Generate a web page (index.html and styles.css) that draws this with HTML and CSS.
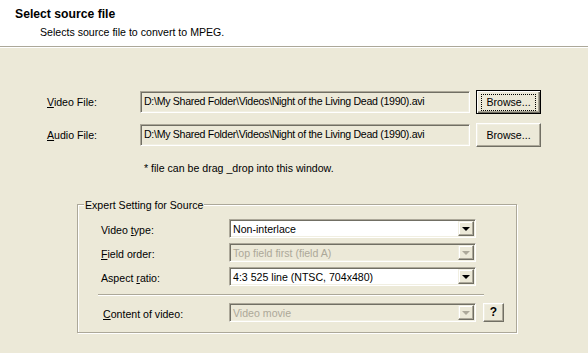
FILE: index.html
```html
<!DOCTYPE html>
<html lang="en">
<head>
	<meta charset="UTF-8">
	<title>Select source file</title>
	<link rel="stylesheet" href="styles.css">
</head>
<body>

<div class="header">
	<h1 class="title">Select source file</h1>
	<p class="subtitle">Selects source file to convert to MPEG.</p>
</div>

<div class="content">
	<div class="file-row">
		<label class="file-label"><u>V</u>ideo File:</label>
		<div class="field">D:\My Shared Folder\Videos\Night of the Living Dead (1990).avi</div>
		<button class="btn btn-browse default"><span class="focus">Browse...</span></button>
	</div>
	<div class="file-row">
		<label class="file-label"><u>A</u>udio File:</label>
		<div class="field">D:\My Shared Folder\Videos\Night of the Living Dead (1990).avi</div>
		<button class="btn btn-browse"><span>Browse...</span></button>
	</div>
	<p class="note">* file can be drag _drop into this window.</p>

	<div class="group">
		<span class="group-title">Expert Setting for Source</span>
		<div class="combo-row">
			<label class="combo-label">Video <u>t</u>ype:</label>
			<div class="combo">
				<span class="combo-text">Non-interlace</span>
				<span class="combo-btn"><i class="arrow"></i></span>
			</div>
		</div>
		<div class="combo-row">
			<label class="combo-label"><u>F</u>ield order:</label>
			<div class="combo disabled">
				<span class="combo-text">Top field first (field A)</span>
				<span class="combo-btn"><i class="arrow"></i></span>
			</div>
		</div>
		<div class="combo-row">
			<label class="combo-label">Aspect <u>r</u>atio:</label>
			<div class="combo">
				<span class="combo-text">4:3 525 line (NTSC, 704x480)</span>
				<span class="combo-btn"><i class="arrow"></i></span>
			</div>
		</div>
		<div class="sep"></div>
		<div class="combo-row last">
			<label class="combo-label"><u>C</u>ontent of video:</label>
			<div class="combo disabled">
				<span class="combo-text">Video movie</span>
				<span class="combo-btn"><i class="arrow"></i></span>
			</div>
			<button class="btn btn-help">?</button>
		</div>
	</div>
</div>

</body>
</html>
```

FILE: styles.css
```css
html, body {
	margin: 0;
	padding: 0;
}
body {
	background-color: #ece9d8;
	font-family: "Liberation Sans", Arial, sans-serif;
	font-size: 10.6px;
	color: #000;
	width: 588px;
	height: 353px;
	overflow: hidden;
}
h1, p {
	margin: 0;
	padding: 0;
}
u {
	text-decoration: underline;
}
.header {
	background-color: #fff;
	height: 47px;
	border-bottom: 1px solid #aca899;
	box-shadow: 0 1px 0 #fff;
	box-sizing: border-box;
	padding-top: 7px;
}
.title {
	font-size: 12.2px;
	font-weight: bold;
	padding-left: 15px;
	line-height: 14px;
}
.subtitle {
	padding-left: 40px;
	line-height: 14px;
	margin-top: 4px;
}
.content {
	padding-top: 43px;
}
.file-row {
	display: flex;
	align-items: center;
	padding-left: 47px;
	height: 24px;
	margin-bottom: 9px;
}
.file-label {
	width: 93px;
}
.field {
	width: 330px;
	height: 22px;
	box-sizing: border-box;
	line-height: 18px;
	padding-left: 3px;
	letter-spacing: -0.3px;
	white-space: nowrap;
	overflow: hidden;
	border: 1px solid;
	border-color: #aca899 #fff #fff #aca899;
	box-shadow: inset 1px 1px 0 #716f64, inset -1px -1px 0 #f1efe2;
}
.btn {
	font-family: inherit;
	font-size: 10.6px;
	color: #000;
	background-color: #ece9d8;
	border: 1px solid;
	border-color: #fff #716f64 #716f64 #fff;
	box-shadow: inset -1px -1px 0 #aca899, inset 1px 1px 0 #f1efe2;
	padding: 0;
	margin: 0;
	box-sizing: border-box;
}
.btn-browse {
	width: 65px;
	height: 24px;
	margin-left: 6px;
}
.btn-browse.default {
	border: 1px solid #000;
	box-shadow: inset 1px 1px 0 #fff, inset -1px -1px 0 #716f64, inset -2px -2px 0 #aca899;
}
.btn-browse span {
	display: inline-block;
	padding: 1px 4px;
	line-height: 13px;
	border: 1px solid transparent;
}
.btn-browse .focus {
	border: 1px dotted #000;
}
.note {
	padding-left: 144px;
	margin-top: 14px;
	line-height: 14px;
}
.group {
	position: relative;
	margin: 29px 0 0 77px;
	width: 440px;
	height: 129px;
	border: 1px solid #aca899;
	box-shadow: 1px 1px 0 #fff, inset 1px 1px 0 #fff;
	box-sizing: border-box;
	padding-top: 14px;
}
.group-title {
	position: absolute;
	top: -7px;
	left: 6px;
	padding: 0 1px;
	line-height: 14px;
	background-color: #ece9d8;
}
.combo-row {
	display: flex;
	align-items: center;
	height: 19px;
	margin-bottom: 5px;
	padding-left: 23px;
}
.combo-row.last {
	padding-left: 25px;
	margin-bottom: 0;
}
.combo-label {
	width: 128px;
	padding-top: 3px;
}
.combo-row.last .combo-label {
	width: 126px;
}
.combo {
	display: flex;
	width: 247px;
	height: 19px;
	box-sizing: border-box;
	background-color: #fff;
	border: 1px solid;
	border-color: #aca899 #fff #fff #aca899;
	box-shadow: inset 1px 1px 0 #716f64, inset -1px -1px 0 #f1efe2;
	padding: 1px 1px 1px 2px;
}
.combo-text {
	flex: 1;
	line-height: 15px;
	padding-left: 1px;
	padding-top: 1px;
	white-space: nowrap;
	overflow: hidden;
}
.combo.disabled {
	background-color: #ece9d8;
	color: #aca899;
}
.combo-btn {
	width: 16px;
	height: 15px;
	box-sizing: border-box;
	background-color: #ece9d8;
	border: 1px solid;
	border-color: #f1efe2 #716f64 #716f64 #f1efe2;
	box-shadow: inset -1px -1px 0 #aca899, inset 1px 1px 0 #fff;
	display: flex;
	align-items: center;
	justify-content: center;
}
.arrow {
	width: 0;
	height: 0;
	border-left: 4px solid transparent;
	border-right: 4px solid transparent;
	border-top: 4px solid #000;
	margin-top: 1px;
}
.combo.disabled .arrow {
	border-top-color: #aca899;
}
.sep {
	margin: 8px 0 8px 20px;
	width: 386px;
	height: 1px;
	background-color: #aca899;
	box-shadow: 0 1px 0 #fff;
}
.btn-help {
	width: 21px;
	height: 19px;
	margin-left: 7px;
	font-weight: bold;
	font-size: 12px;
	line-height: 15px;
}
```
